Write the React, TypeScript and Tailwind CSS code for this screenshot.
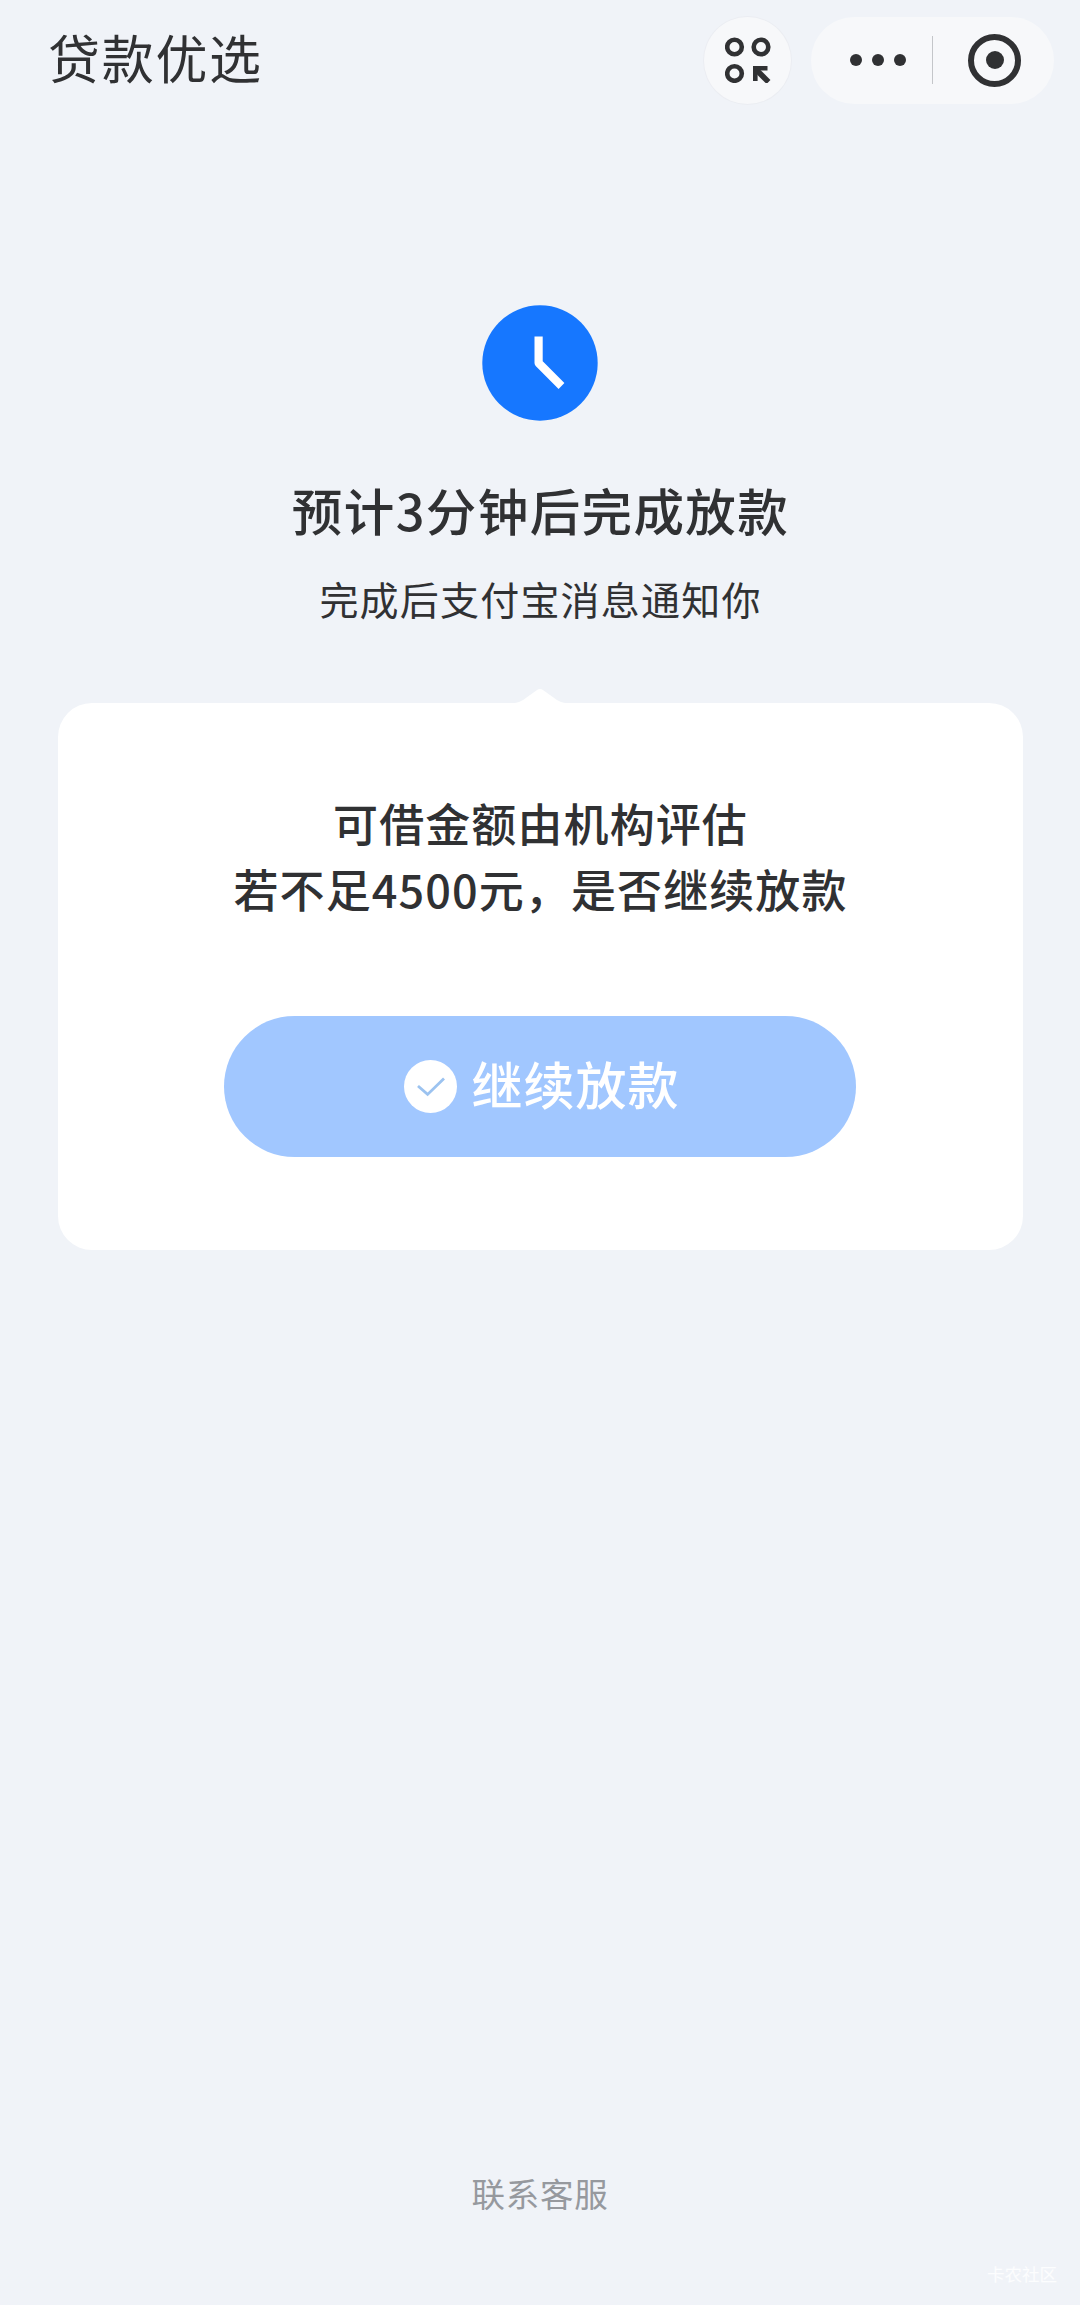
function ScanIcon() {
  return (
    <svg width="46" height="46" viewBox="0 0 46 46" fill="none" stroke="#303133" strokeWidth="4.6">
      <circle cx="9.5" cy="10" r="7.3" />
      <circle cx="36" cy="10" r="7.3" />
      <circle cx="9.5" cy="36.5" r="7.3" />
      <path d="M43.5 45 31 32.5" strokeWidth="5.5" />
      <path d="M28 44V29h14.500v4.600H32.600V44Z" fill="#303133" stroke="none" />
    </svg>
  );
}

function ClockIcon() {
  return (
    <svg width="116" height="116" viewBox="0 0 116 116" fill="none">
      <circle cx="58" cy="58" r="57.7" fill="#1677ff" />
      <path d="M56.6 31.500V58L79.500 81" stroke="#fff" strokeWidth="8.2" strokeLinejoin="round" />
    </svg>
  );
}

function CheckIcon() {
  return (
    <svg width="53" height="53" viewBox="0 0 53 53" fill="none">
      <circle cx="26.5" cy="26.5" r="26.5" fill="#fff" />
      <path d="M14 26 23.600 34.400 40 18.500" stroke="#9cc3f0" strokeWidth="2.8" />
    </svg>
  );
}

function Header() {
  return (
    <header className="flex h-[120px] items-center justify-between pr-[26px] pl-[48px]">
      <h1 className="pb-[7px] text-[52px] leading-none tracking-[1.7px]">贷款优选</h1>
      <div className="flex items-center gap-[20px]">
        <button className="flex size-[87px] items-center justify-center rounded-full bg-[#f7f8fa] ring-1 ring-[#ebedf2]">
          <ScanIcon />
        </button>
        <div className="flex h-[87px] w-[243px] items-center rounded-full bg-[#f7f8fa] pl-[39px]">
          <button className="flex gap-[10px]">
            <span className="size-[12px] rounded-full bg-[#303133]" />
            <span className="size-[12px] rounded-full bg-[#303133]" />
            <span className="size-[12px] rounded-full bg-[#303133]" />
          </button>
          <span className="ml-[26px] h-[48px] w-px bg-[#c4c6c9]" />
          <button className="ml-[35px] flex size-[53px] items-center justify-center rounded-full border-[6px] border-[#303133]">
            <span className="size-[18px] rounded-full bg-[#303133]" />
          </button>
        </div>
      </div>
    </header>
  );
}

export default function App() {
  return (
    <div
      lang="zh-CN"
      className="relative flex h-[2305px] w-[1080px] flex-col overflow-hidden bg-[#f0f3f8] font-['Noto_Sans_CJK_SC',sans-serif] text-[#303133]"
    >
      <Header />

      <main className="flex flex-col items-center">
        <div className="mt-[185px]">
          <ClockIcon />
        </div>
        <h2 className="mt-[52px] pl-px text-[50.5px] leading-[72px] font-medium tracking-[1.4px]">
          预计3分钟后完成放款
        </h2>
        <p className="mt-[23px] pl-px text-[39px] leading-[60px] tracking-[1.2px]">完成后支付宝消息通知你</p>

        {/* Card with pointer */}
        <svg className="mt-[60px]" width="50" height="15" viewBox="0 0 50 15" fill="#fff">
          <path d="M0 15Q4 14.500 8 12L22 2Q25 0 28 2L42 12Q46 14.500 50 15Z" />
        </svg>
        <section className="flex h-[547px] w-[965px] flex-col items-center rounded-[34px] bg-white pt-[87px]">
          <p className="pl-px text-center text-[45px] leading-[66px] font-medium tracking-[1.1px]">
            可借金额由机构评估
            <br />
            若不足4500元，是否继续放款
          </p>
          <button className="mt-[94px] flex h-[141px] w-[632px] items-center justify-center gap-[14px] rounded-full bg-[#a1c7ff] pl-[4px] text-[51px] font-medium tracking-[1px] text-white">
            <CheckIcon />
            <span className="pb-[6px] leading-none">继续放款</span>
          </button>
        </section>
      </main>

      <footer className="mt-auto pb-[87px] text-center text-[33.5px] leading-[50px] tracking-[0.8px] text-[#96999e]">
        联系客服
      </footer>

      <span className="absolute right-[23px] bottom-[19px] text-[17.5px] leading-[24px] text-white/80">卡农社区</span>
    </div>
  );
}
